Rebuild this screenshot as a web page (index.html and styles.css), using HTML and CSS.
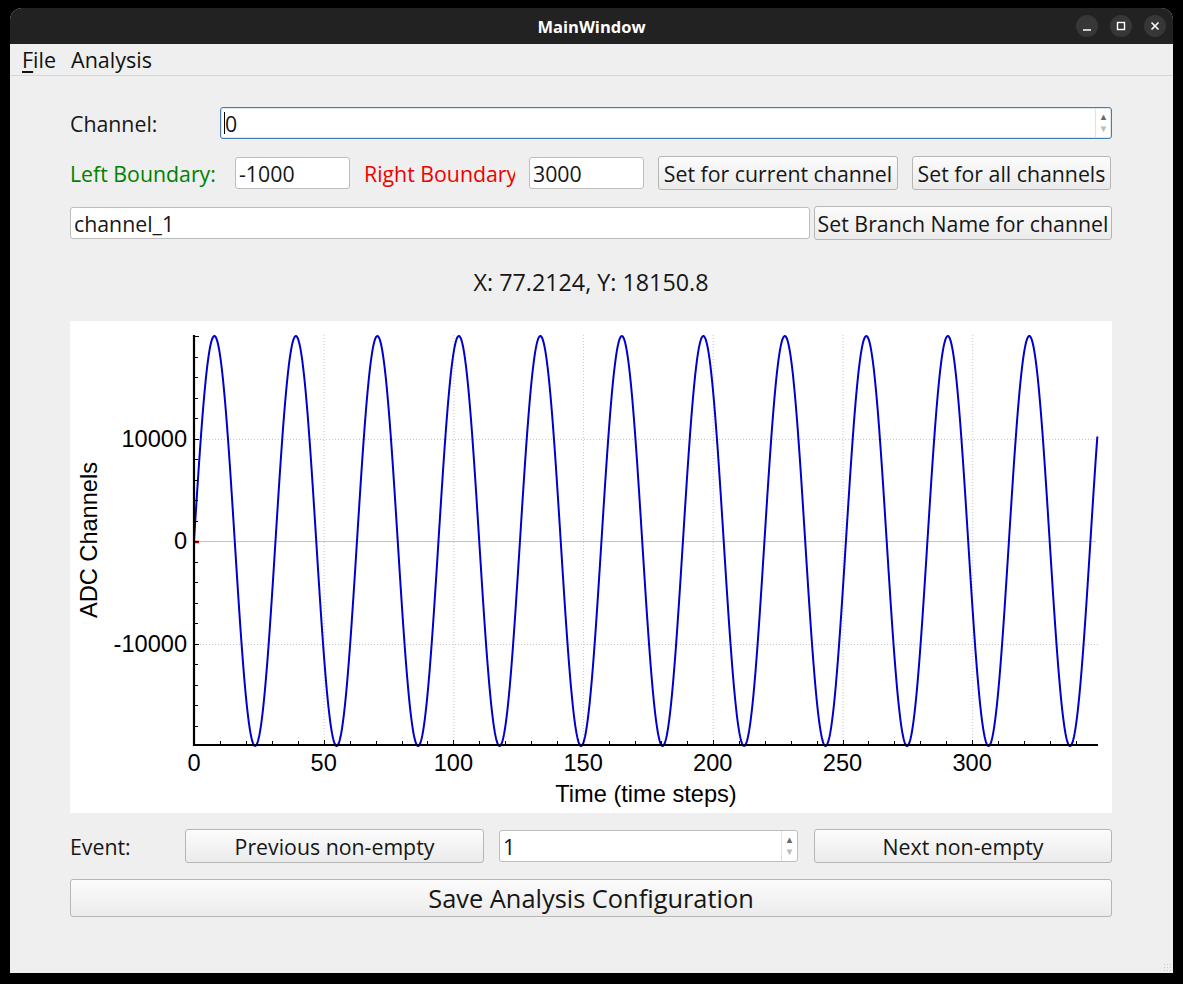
FILE: index.html
```html
<!DOCTYPE html>
<html>
<head>
<meta charset="utf-8">
<title>MainWindow</title>
<link rel="stylesheet" href="styles.css">
</head>
<body>
<div class="window">
  <div class="titlebar">
    <div></div>
    <div class="title">MainWindow</div>
    <div class="controls">
      <span class="ctl"><svg width="22" height="22" viewBox="0 0 22 22"><line x1="7" y1="15" x2="15" y2="15" stroke="#fff" stroke-width="1.6"/></svg></span>
      <span class="ctl"><svg width="22" height="22" viewBox="0 0 22 22"><rect x="7.5" y="7.5" width="7" height="7" fill="none" stroke="#fff" stroke-width="1.4"/></svg></span>
      <span class="ctl"><svg width="22" height="22" viewBox="0 0 22 22"><path d="M7.5 7.5 L14.5 14.5 M14.5 7.5 L7.5 14.5" stroke="#fff" stroke-width="1.6"/></svg></span>
    </div>
  </div>
  <div class="menubar">
    <span class="menu"><span class="mnemonic">F</span>ile</span>
    <span class="menu">Analysis</span>
  </div>
  <div class="content">
    <div class="row row-channel">
      <span class="lbl lbl-channel">Channel:</span>
      <div class="spin spin-focus spin-channel">
        <span class="spin-text"><span class="caret"></span>0</span>
        <span class="spin-arrows"><span class="arr up">&#9650;</span><span class="arr down">&#9660;</span></span>
      </div>
    </div>
    <div class="row row-bounds">
      <span class="lbl lbl-left">Left Boundary:</span>
      <div class="field field-num">-1000</div>
      <span class="lbl lbl-right">Right Boundary:</span>
      <div class="field field-num">3000</div>
      <button class="btn btn-cur">Set for current channel</button>
      <button class="btn btn-all">Set for all channels</button>
    </div>
    <div class="row row-branch">
      <div class="field field-branch">channel_1</div>
      <button class="btn btn-branch">Set Branch Name for channel</button>
    </div>
    <div class="coords">X: 77.2124, Y: 18150.8</div>
    <div class="plot">
      <svg id="plot-svg" width="1042" height="492" viewBox="0 0 1042 492"></svg>
    </div>
    <div class="row row-event">
      <span class="lbl lbl-event">Event:</span>
      <button class="btn btn-nav">Previous non-empty</button>
      <div class="spin spin-event">
        <span class="spin-text">1</span>
        <span class="spin-arrows"><span class="arr up">&#9650;</span><span class="arr down">&#9660;</span></span>
      </div>
      <button class="btn btn-nav btn-next">Next non-empty</button>
    </div>
    <button class="btn btn-save">Save Analysis Configuration</button>
  </div>
  <div class="grip"></div>
</div>
<script src="plot.js"></script>
</body>
</html>
```

FILE: styles.css
```css
* { box-sizing: border-box; }
html, body { margin: 0; padding: 0; background: #000; }
body { font-family: "Open Sans", "Noto Sans", sans-serif; color: #161616; }

.window {
  margin: 8px 0 0 10px;
  width: 1163px;
  height: 965px;
  background: #efefef;
  border-radius: 12px 12px 0 0;
  overflow: hidden;
  display: flex;
  flex-direction: column;
  position: relative;
}

.titlebar {
  height: 36px;
  background: #222222;
  display: grid;
  grid-template-columns: 1fr auto 1fr;
  align-items: center;
}
.title {
  color: #ffffff;
  font-weight: 700;
  font-size: 16.5px;
}
.controls {
  justify-self: end;
  display: flex;
  gap: 12px;
  padding-right: 7px;
}
.ctl {
  width: 22px;
  height: 22px;
  border-radius: 50%;
  background: #373737;
  display: block;
}
.ctl svg { display: block; }

.menubar {
  height: 32px;
  border-bottom: 1px solid #d6d6d6;
  display: flex;
  align-items: center;
  padding-left: 12px;
  gap: 15px;
  font-size: 21.5px;
  color: #111;
}
.mnemonic { text-decoration: underline; text-underline-offset: 3px; }

.content {
  padding: 31px 61px 0 60px;
  display: flex;
  flex-direction: column;
  font-size: 21.3px;
}

.row { display: flex; align-items: center; }
.row-channel { height: 32px; }
.row-bounds { height: 34px; margin-top: 17px; gap: 14px; }
.row-branch { height: 34px; margin-top: 16px; gap: 4px; }
.row-event { height: 34px; margin-top: 16px; gap: 15px; }

.lbl { white-space: nowrap; overflow: hidden; }
.lbl-channel { width: 150px; flex: none; }
.lbl-left { width: 151px; flex: none; color: #008000; }
.lbl-right { width: 151px; flex: none; color: #f00000; }
.lbl-event { width: 100px; flex: none; }

.field, .spin {
  height: 32px;
  background: #ffffff;
  border: 1px solid #bdbdbd;
  border-radius: 3px;
  display: flex;
  align-items: center;
  padding-left: 3px;
  white-space: nowrap;
  overflow: hidden;
}
.field-num { width: 115px; flex: none; }
.field-branch { flex: 1; }

.spin { padding-right: 0; }
.spin-channel { flex: 1; }
.spin-event { width: 299px; flex: none; height: 32px; }
.spin-focus { border-color: #4a7cad; box-shadow: inset 0 0 0 1px #d9e6f2; }
.spin-text { flex: 1; display: flex; align-items: center; }
.caret {
  display: inline-block;
  width: 1px;
  height: 22px;
  background: #000;
}
.spin-arrows {
  width: 16px;
  height: 100%;
  border-left: 1px solid #e2e2e2;
  display: flex;
  flex-direction: column;
  justify-content: center;
  align-items: center;
  font-size: 9.5px;
  line-height: 12px;
}
.arr.up { color: #6a6a6a; }
.arr.down { color: #bcbcbc; }

.btn {
  font-family: inherit;
  font-size: 21.3px;
  color: #161616;
  height: 34px;
  border: 1px solid #b6b6b6;
  border-radius: 3px;
  background: linear-gradient(#fcfcfc, #ebebeb);
  padding: 0;
  white-space: nowrap;
  overflow: hidden;
  flex: none;
}
.btn-cur { width: 240px; }
.btn-all { width: 199px; }
.btn-branch { width: 298px; }
.btn-nav { width: 299px; }
.btn-next { width: 298px; margin-left: 1px; }
.btn-save {
  height: 38px;
  margin-top: 16px;
  font-size: 25.4px;
  width: 100%;
}

.coords {
  height: 81px;
  display: flex;
  align-items: center;
  justify-content: center;
  font-size: 23.3px;
  padding-top: 3px;
}

.plot {
  height: 492px;
  background: #ffffff;
}
.plot svg { display: block; }
.plot text {
  font-family: "Liberation Sans", Arial, sans-serif;
  font-size: 23.6px;
  fill: #000;
}
.grid { stroke: #c8c8c8; stroke-width: 1; stroke-dasharray: 1 2; }
.zero { stroke: #c4c4c4; stroke-width: 1; }
.axis { stroke: #000; stroke-width: 2.2; }
.tick { stroke: #000; stroke-width: 1; }
.curve { fill: none; stroke: #0000cc; stroke-width: 2; stroke-linejoin: round; }
.marker { stroke: #cc0000; stroke-width: 2.5; }

.grip {
  position: absolute;
  right: 2px;
  bottom: 2px;
  width: 8px;
  height: 8px;
  background-image: radial-gradient(#c8c8c8 0.8px, transparent 1px);
  background-size: 3px 3px;
}
```

FILE: plot.js
```js
(function () {
  var NS = 'http://www.w3.org/2000/svg';
  var svg = document.getElementById('plot-svg');
  var X0 = 124, Y0 = 220, SX = 2.594, SY = 0.01025;
  var XR = 1028, YT = 14, YB = 424;
  function xp(v) { return X0 + v * SX; }
  function yp(v) { return Y0 - v * SY; }
  function el(tag, attrs, text) {
    var e = document.createElementNS(NS, tag);
    for (var k in attrs) e.setAttribute(k, attrs[k]);
    if (text !== undefined) e.textContent = text;
    svg.appendChild(e);
    return e;
  }
  var v;
  for (v = 50; v <= 300; v += 50) {
    el('line', { 'class': 'grid', x1: xp(v) + 0.5, x2: xp(v) + 0.5, y1: YT, y2: YB });
  }
  [10000, -10000].forEach(function (g) {
    el('line', { 'class': 'grid', x1: X0, x2: XR, y1: Math.round(yp(g)) + 0.5, y2: Math.round(yp(g)) + 0.5 });
  });
  el('line', { 'class': 'zero', x1: X0, x2: XR - 2, y1: Y0 + 0.5, y2: Y0 + 0.5 });

  var pts = [];
  for (var t = 0; t <= 351; t += 0.25) {
    var x = xp(t);
    if (x > XR) break;
    pts.push(x.toFixed(2) + ',' + yp(20000 * Math.sin(t / 5)).toFixed(2));
  }
  el('polyline', { 'class': 'curve', points: pts.join(' ') });
  el('line', { 'class': 'marker', x1: X0, x2: X0 + 5, y1: Y0 + 1, y2: Y0 + 1 });

  el('line', { 'class': 'axis', x1: X0, x2: X0, y1: YT, y2: YB + 1 });
  el('line', { 'class': 'axis', x1: X0 - 1, x2: XR, y1: YB, y2: YB });

  for (v = -18000; v <= 20000; v += 2000) {
    var y = Math.round(yp(v)) + 0.5;
    el('line', { 'class': 'tick', x1: X0, x2: X0 + (v % 10000 === 0 ? 5 : 4), y1: y, y2: y });
  }
  for (v = 10; v <= 340; v += 10) {
    var xx = Math.round(xp(v)) + 0.5;
    el('line', { 'class': 'tick', x1: xx, x2: xx, y1: YB, y2: YB - (v % 50 === 0 ? 5 : 4) });
  }

  [10000, 0, -10000].forEach(function (g) {
    el('text', { x: 117, y: yp(g) + 8, 'text-anchor': 'end' }, String(g));
  });
  for (v = 0; v <= 300; v += 50) {
    el('text', { x: xp(v), y: 450, 'text-anchor': 'middle' }, String(v));
  }
  el('text', { x: 576, y: 481, 'text-anchor': 'middle' }, 'Time (time steps)');
  el('text', { x: 0, y: 0, 'text-anchor': 'middle', transform: 'translate(27 219) rotate(-90)' }, 'ADC Channels');
})();
```
